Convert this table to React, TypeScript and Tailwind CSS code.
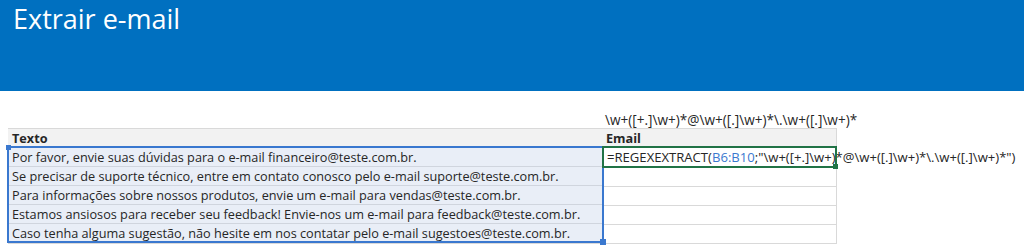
import React from "react";

const rows = [
  "Por favor, envie suas dúvidas para o e-mail financeiro@teste.com.br.",
  "Se precisar de suporte técnico, entre em contato conosco pelo e-mail suporte@teste.com.br.",
  "Para informações sobre nossos produtos, envie um e-mail para vendas@teste.com.br.",
  "Estamos ansiosos para receber seu feedback! Envie-nos um e-mail para feedback@teste.com.br.",
  "Caso tenha alguma sugestão, não hesite em nos contatar pelo e-mail sugestoes@teste.com.br.",
];

const regex = "\\w+([+.]\\w+)*@\\w+([.]\\w+)*\\.\\w+([.]\\w+)*";

export default function App() {
  return (
    <div className="h-[250px] w-[1024px] overflow-hidden bg-white font-['Open_Sans',sans-serif] text-[#262626]">
      {/* Banner */}
      <div className="h-[91px] bg-[#0070c0] pl-[13px]">
        <h1 className="text-[27px] leading-[37px] text-white">Extrair e-mail</h1>
      </div>

      <div className="pl-[8px] pt-[20px]">
        {/* regex hint over column B */}
        <div className="ml-[597px] h-[17px] text-[13.6px] leading-[17px] whitespace-nowrap">
          {regex}
        </div>

        <div className="flex w-[829px] border-b border-[#d9d9d9] text-[12.7px] leading-[18px]">
          {/* column A */}
          <div className="flex w-[595px] flex-col">
            <div className="h-[19px] border-t border-[#d9d9d9] bg-[#f2f2f2] pl-[4px] font-bold">Texto</div>
            <div className="relative outline-2 -outline-offset-1 outline-[#3a78cf]">
              {rows.map((text) => (
                <div
                  key={text}
                  className="h-[19px] border-t border-[#d0d5de] bg-[#e9eef7] pl-[4px] whitespace-nowrap first:border-t-0 first:pt-px"
                >
                  {text}
                </div>
              ))}
              <span className="absolute -left-[2px] -top-[2px] h-[5px] w-[5px] bg-[#3a78cf]" />
              <span className="absolute -bottom-[3px] -right-[3px] h-[6px] w-[6px] bg-[#3a78cf]" />
            </div>
          </div>

          {/* column B */}
          <div className="flex w-[234px] flex-col border-r border-[#d9d9d9]">
            <div className="h-[19px] border-t border-[#d9d9d9] bg-[#f2f2f2] pl-[3px] font-bold">Email</div>
            <div className="relative z-10 h-[20px] pl-[4px] pt-px text-[13.1px] whitespace-nowrap outline-2 -outline-offset-1 outline-[#217346]">
              =REGEXEXTRACT(<span className="text-[#3a78cf]">B6:B10</span>;"{regex}")
              <span className="absolute -bottom-[2px] -right-[2px] h-[5px] w-[5px] bg-[#217346]" />
            </div>
            {rows.slice(1).map((text) => (
              <div key={text} className="h-[19px] border-t border-[#d9d9d9] bg-white" />
            ))}
          </div>
        </div>
      </div>
    </div>
  );
}
